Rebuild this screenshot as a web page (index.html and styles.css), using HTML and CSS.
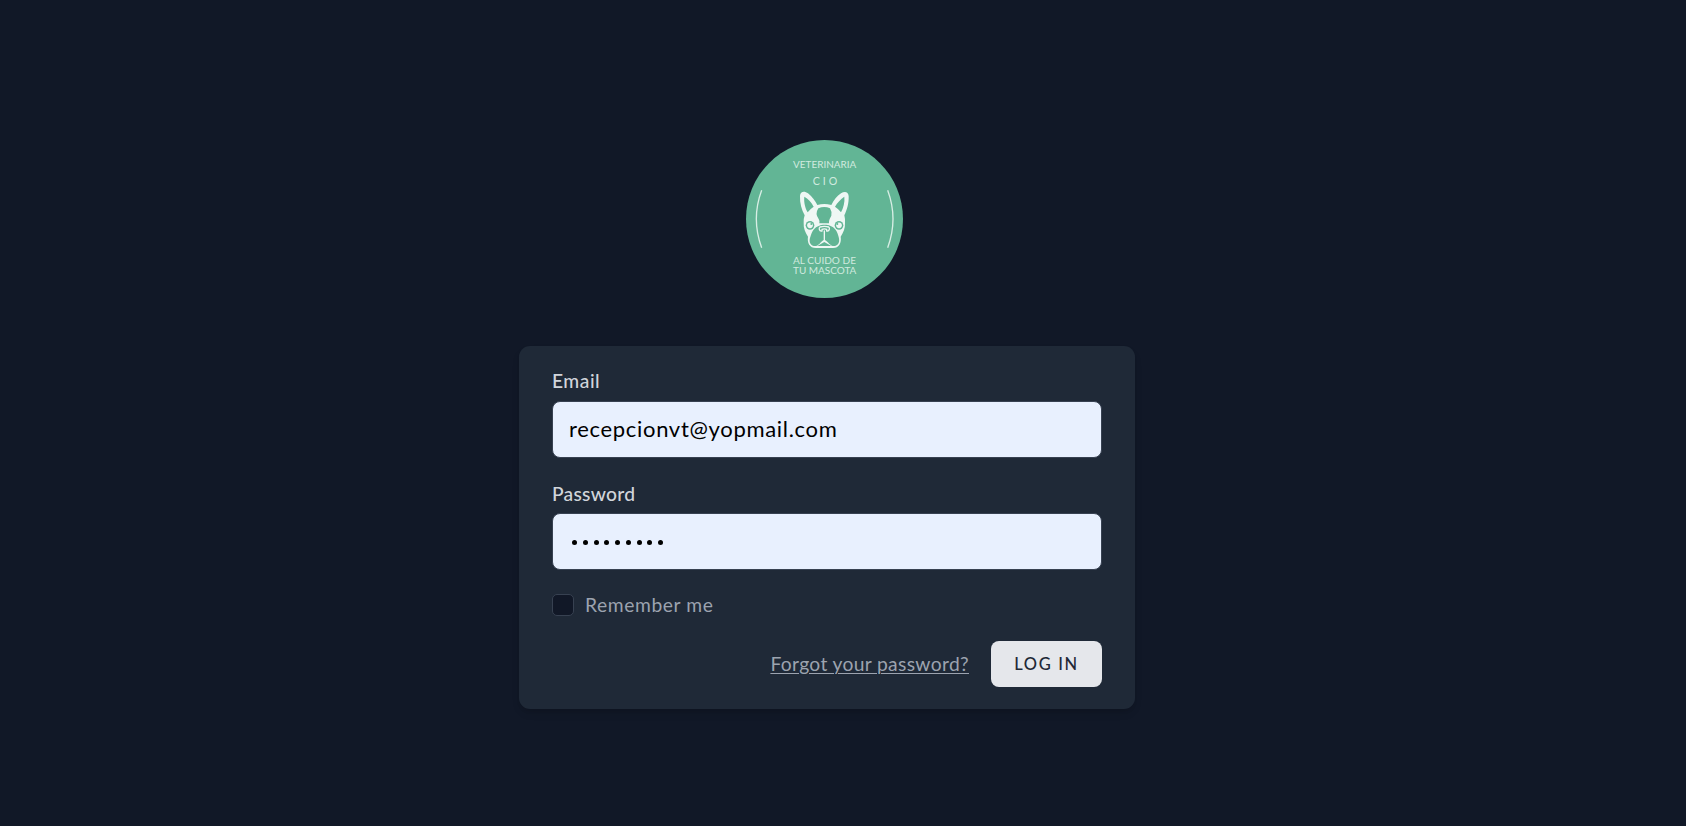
FILE: index.html
```
<!DOCTYPE html>
<html lang="en">
<head>
<meta charset="utf-8">
<title>Log in</title>
<link rel="stylesheet" href="styles.css">
</head>
<body>
<main class="page">
  <svg class="logo" viewBox="30 30 471 474" role="img" aria-label="Veterinaria CIO">
    <ellipse cx="265.5" cy="267" rx="235.5" ry="237" fill="#62b595"/>
    <g class="logo-text">
      <text x="171" y="115" font-size="31" textLength="190" lengthAdjust="spacingAndGlyphs">VETERINARIA</text>
      <text x="230" y="166" font-size="32" textLength="74">CIO</text>
      <text x="171" y="403" font-size="28" textLength="189" lengthAdjust="spacingAndGlyphs">AL CUIDO DE</text>
      <text x="171" y="432" font-size="28" textLength="190" lengthAdjust="spacingAndGlyphs">TU MASCOTA</text>
    </g>
    <path class="arc" d="M77 181Q45 267 77 353M455 181Q487 267 455 353"/>
    <path fill="#eff7f4" fill-rule="evenodd" d="M192 198C193 182 207 183 216 190C229 200 238 214 244 225Q265 219 286 225C293 211 303 198 315 190C325 183 337 184 338 198C339 221 332 241 325 256Q328 267 327 279C328 294 322 308 314 320C317 338 309 354 291 354H240C221 354 213 338 216 320C208 308 202 294 203 279Q202 267 206 256C197 239 191 219 192 198ZM205 200C203 218 208 235 215 247Q222 237 233 230C226 217 216 205 205 200ZM325 200C314 207 304 218 297 230Q308 237 315 247C322 234 327 217 325 200Z"/>
    <g fill="#62b595">
      <path d="M247 235Q265 227 282 235Q288 244 286 257L281 267Q278 274 279 280H250Q252 273 248 267Q236 252 247 235Z"/>
      <path d="M250 287C256 283 276 283 282 287C296 291 304 304 308 321C312 335 308 345 297 348C282 350 278 335 265 329C252 335 249 350 233 348C222 345 218 334 223 321C228 304 235 291 250 287Z"/>
      <circle cx="222" cy="286" r="13"/><circle cx="309" cy="286" r="13"/>
      <path d="M244 348L265 336L286 348Z"/>
    </g>
    <circle cx="222" cy="286" r="8.5" fill="#eff7f4"/>
    <circle cx="309" cy="286" r="8.5" fill="#eff7f4"/>
    <circle cx="226" cy="282" r="3" fill="#62b595"/>
    <circle cx="304" cy="282" r="3" fill="#62b595"/>
    <path class="face" d="M258 303C249 305 248 293 252 291Q265 287 278 291C282 293 281 305 272 303V298Q265 295 258 298ZM265 303V331"/>
  </svg>
  <form class="card">
    <label class="label t-email" for="email">Email</label>
    <input class="input" id="email" type="text" value="recepcionvt@yopmail.com">
    <label class="label label-next t-password" for="password">Password</label>
    <div class="input dots" id="password"><i></i><i></i><i></i><i></i><i></i><i></i><i></i><i></i><i></i></div>
    <div class="remember"><span class="check"></span><span class="t-remember">Remember me</span></div>
    <div class="actions"><a class="forgot">Forgot your password?</a><button class="button" type="button">LOG IN</button></div>
  </form>
</main>
</body>
</html>
```
FILE: styles.css
```
* { box-sizing: border-box; }
body { margin: 0; background: #111827; font-family: Lato, "Open Sans", sans-serif; }
.page { width: 1654px; height: 826px; padding-top: 140px; display: flex; flex-direction: column; align-items: center; }
.logo { display: block; width: 157px; height: 158px; flex: none; margin-right: 5px; }
.logo-text { fill: #d0eadf; font-family: Lato, sans-serif; }
.arc { fill: none; stroke: #d8eee5; stroke-width: 4; }
.face { fill: none; stroke: #eff7f4; stroke-width: 4; stroke-linejoin: round; stroke-linecap: round; }
.card { width: 616px; height: 363px; margin-top: 48px; padding: 21px 33px; border-radius: 11px; background: #1f2937; box-shadow: 0 5px 8px -1px rgba(0,0,0,.1), 0 3px 5px -2px rgba(0,0,0,.1); }
.label { display: block; height: 27px; line-height: 27px; font-size: 19.25px; font-weight: 500; color: #d1d5db; }
.label-next { margin-top: 22px; }
.t-email { letter-spacing: .5px; }
.t-password { letter-spacing: .25px; }
.t-remember { letter-spacing: .6px; padding-bottom: 2px; }
.input { display: block; width: 550px; height: 57px; margin-top: 7px; padding: 0 16px 2px; border: 1px solid #374151; border-radius: 8px; background: #e8f0fe; color: #000; font: 400 22px Lato, sans-serif; letter-spacing: .68px; outline: 0; }
.dots { display: flex; align-items: center; margin-top: 6px; gap: 5.75px; padding: 2px 0 0 19px; }
.dots i { width: 5px; height: 5px; border-radius: 50%; background: #000; }
.remember { display: flex; align-items: center; height: 28px; margin-top: 21px; gap: 11px; font-size: 19.25px; color: #9ca3af; }
.check { width: 22px; height: 22px; border: 1px solid #374151; border-radius: 5px; background: #111827; }
.actions { display: flex; align-items: center; justify-content: flex-end; margin-top: 22px; gap: 22px; }
.forgot { padding-bottom: 2px; font-size: 19.25px; letter-spacing: .34px; color: #9ca3af; text-decoration: underline; text-decoration-thickness: 1px; text-underline-offset: 2px; }
.button { width: 111px; height: 46px; padding: 0; border: 0; border-radius: 8px; background: #e5e7eb; color: #1f2937; font: 500 16.5px Lato, sans-serif; letter-spacing: 1.65px; }
```
